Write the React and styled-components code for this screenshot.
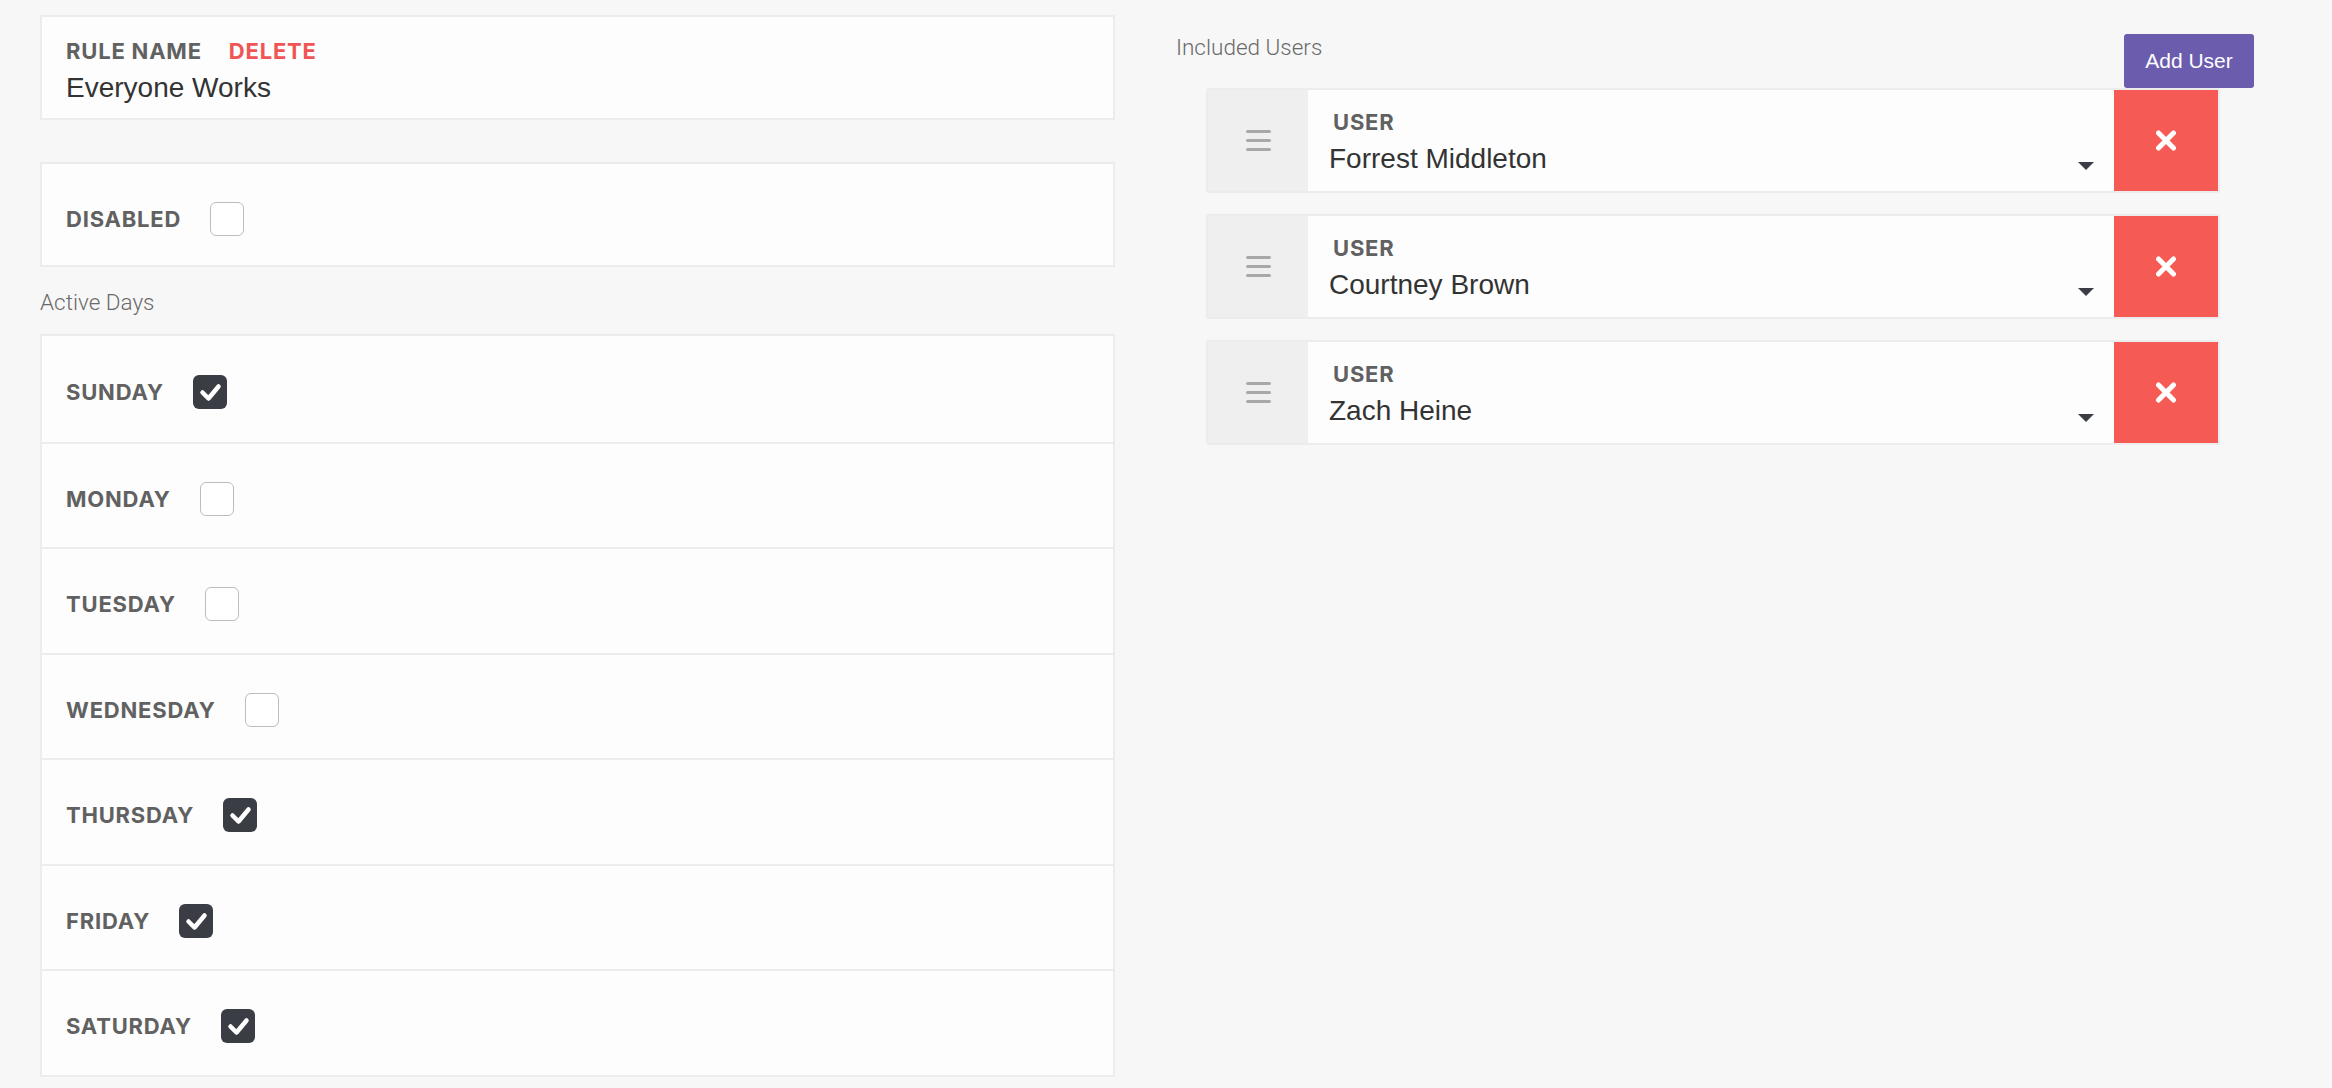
import React from "react";
import styled, { createGlobalStyle } from "styled-components";

const GlobalStyle = createGlobalStyle`
  html, body {
    margin: 0;
    padding: 0;
    background: #f7f7f7;
  }
  * {
    box-sizing: border-box;
  }
`;

const days = [
  { name: "SUNDAY", on: true },
  { name: "MONDAY", on: false },
  { name: "TUESDAY", on: false },
  { name: "WEDNESDAY", on: false },
  { name: "THURSDAY", on: true },
  { name: "FRIDAY", on: true },
  { name: "SATURDAY", on: true },
];

const users = ["Forrest Middleton", "Courtney Brown", "Zach Heine"];

function Checkbox({ checked }) {
  return (
    <Box checked={checked}>
      {checked && (
        <svg width="34" height="34" viewBox="0 0 34 34">
          <polyline
            points="9.5,17.5 15.5,23.5 25.5,11.5"
            fill="none"
            stroke="#fff"
            strokeWidth="4.5"
            strokeLinecap="round"
            strokeLinejoin="round"
          />
        </svg>
      )}
    </Box>
  );
}

function App() {
  return (
    <>
      <GlobalStyle />
      <Page>
        <LeftColumn>
          <Card>
            <LabelLine>
              <FieldLabel>Rule Name</FieldLabel>
              <DeleteLink>Delete</DeleteLink>
            </LabelLine>
            <ValueText>Everyone Works</ValueText>
          </Card>

          <ToggleCard>
            <FieldLabel>Disabled</FieldLabel>
            <Checkbox checked={false} />
          </ToggleCard>

          <SectionTitle>Active Days</SectionTitle>
          <DayList>
            {days.map((d) => (
              <DayRow key={d.name}>
                <FieldLabel>{d.name}</FieldLabel>
                <Checkbox checked={d.on} />
              </DayRow>
            ))}
          </DayList>
        </LeftColumn>

        <RightColumn>
          <UsersHeader>
            <SectionTitle as="div" $flush>Included Users</SectionTitle>
            <AddButton>Add User</AddButton>
          </UsersHeader>
          <UserList>
            {users.map((u) => (
              <UserRow key={u}>
                <DragHandle>
                  <svg width="25" height="21" viewBox="0 0 25 21">
                    <rect x="0" y="0" width="25" height="3" rx="1.5" fill="#a8a8a8" />
                    <rect x="0" y="9" width="25" height="3" rx="1.5" fill="#a8a8a8" />
                    <rect x="0" y="18" width="25" height="3" rx="1.5" fill="#a8a8a8" />
                  </svg>
                </DragHandle>
                <UserBody>
                  <FieldLabel $indent>User</FieldLabel>
                  <SelectLine>
                    <SelectValue>{u}</SelectValue>
                    <Caret />
                  </SelectLine>
                </UserBody>
                <RemoveButton>
                  <svg width="22" height="21" viewBox="0 0 22 21">
                    <line x1="3.5" y1="3" x2="18.5" y2="18" stroke="#fff" strokeWidth="5" strokeLinecap="round" />
                    <line x1="18.5" y1="3" x2="3.5" y2="18" stroke="#fff" strokeWidth="5" strokeLinecap="round" />
                  </svg>
                </RemoveButton>
              </UserRow>
            ))}
          </UserList>
        </RightColumn>
      </Page>
    </>
  );
}

export default App;

const Page = styled.div`
  display: grid;
  grid-template-columns: 1075px 1078px;
  column-gap: 61px;
  padding: 15px 0 0 40px;
  min-height: 1088px;
`;

const LeftColumn = styled.div`
  display: flex;
  flex-direction: column;
`;

const Card = styled.div`
  background: #fdfdfd;
  border: 2px solid #ececec;
  padding: 21px 24px 13px;
  height: 105px;
`;

const LabelLine = styled.div`
  display: flex;
  align-items: baseline;
  height: 26px;
`;

const FieldLabel = styled.span`
  font-family: Inter, "Open Sans", sans-serif;
  font-weight: 700;
  font-size: 22px;
  line-height: 26px;
  text-transform: uppercase;
  color: #616161;
  letter-spacing: 0.8px;
  padding-left: ${(p) => (p.$indent ? "4px" : "0")};
`;

const DeleteLink = styled(FieldLabel)`
  color: #f05454;
  margin-left: 27px;
  cursor: pointer;
`;

const ValueText = styled.div`
  margin-top: 7px;
  font-family: "Liberation Sans", Arial, sans-serif;
  font-size: 28px;
  line-height: 34px;
  color: #333;
`;

const ToggleCard = styled.div`
  margin-top: 42px;
  background: #fdfdfd;
  border: 2px solid #ececec;
  height: 105px;
  padding: 38px 24px 29px;
  display: flex;
  align-items: center;
  gap: 29px;
`;

const SectionTitle = styled.div`
  margin: ${(p) => (p.$flush ? "0" : "22px 0 19px")};
  font-family: Roboto, "Liberation Sans", sans-serif;
  font-weight: 300;
  font-size: 22.5px;
  line-height: 26px;
  color: #6a6a6a;
`;

const DayList = styled.div`
  background: #fdfdfd;
  border: 2px solid #ececec;
  display: flex;
  flex-direction: column;
`;

const DayRow = styled.div`
  height: 105.5px;
  padding: 38px 24px 31px;
  display: flex;
  align-items: center;
  gap: 29px;
  & + & {
    border-top: 2px solid #ececec;
  }
`;

const Box = styled.span`
  width: 34px;
  height: 34px;
  flex: none;
  border-radius: 6px;
  display: inline-flex;
  align-items: center;
  justify-content: center;
  background: ${(p) => (p.checked ? "#3a3e44" : "#fff")};
  border: ${(p) => (p.checked ? "none" : "1.5px solid #bdbdbd")};
`;

const RightColumn = styled.div`
  padding-top: 19px;
  display: flex;
  flex-direction: column;
`;

const UsersHeader = styled.div`
  display: flex;
  justify-content: space-between;
  align-items: flex-start;
  height: 54px;
`;

const AddButton = styled.button`
  width: 130px;
  height: 54px;
  border: none;
  border-radius: 3px;
  background: #6b5cae;
  color: #fff;
  font-family: "Liberation Sans", Arial, sans-serif;
  font-size: 21px;
  cursor: pointer;
`;

const UserList = styled.div`
  display: flex;
  flex-direction: column;
  gap: 21px;
  padding: 0 34px 0 30px;
`;

const UserRow = styled.div`
  display: flex;
  height: 105px;
  border: 2px solid #ececec;
  border-radius: 3px;
  background: #fdfdfd;
`;

const DragHandle = styled.div`
  width: 100px;
  flex: none;
  background: #efefef;
  display: flex;
  align-items: center;
  justify-content: center;
`;

const UserBody = styled.div`
  flex: 1;
  padding: 19px 20px 0 21px;
  display: flex;
  flex-direction: column;
`;

const SelectLine = styled.div`
  margin-top: 7px;
  display: flex;
  align-items: center;
  justify-content: space-between;
`;

const SelectValue = styled.span`
  font-family: "Liberation Sans", Arial, sans-serif;
  font-size: 28px;
  line-height: 34px;
  color: #333;
`;

const Caret = styled.span`
  width: 0;
  height: 0;
  margin-top: 14px;
  border-left: 8px solid transparent;
  border-right: 8px solid transparent;
  border-top: 8px solid #3a3e44;
`;

const RemoveButton = styled.div`
  width: 104px;
  flex: none;
  background: #f65a55;
  display: flex;
  align-items: center;
  justify-content: center;
  cursor: pointer;
`;
